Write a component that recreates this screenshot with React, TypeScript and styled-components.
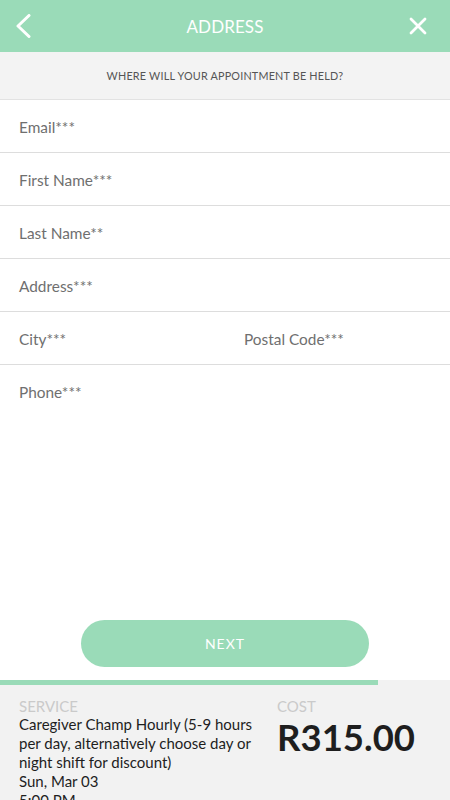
import React from "react";
import styled, { createGlobalStyle } from "styled-components";

const GlobalStyle = createGlobalStyle`
  html, body {
    margin: 0;
    padding: 0;
    background: #ffffff;
    font-family: "Lato", "Open Sans", sans-serif;
  }
  * {
    box-sizing: border-box;
  }
`;

const GREEN = "#9adbb8";

interface FieldProp {
  label: string;
}

const rows: FieldProp[][] = [
  [{ label: "Email***" }],
  [{ label: "First Name***" }],
  [{ label: "Last Name**" }],
  [{ label: "Address***" }],
  [{ label: "City***" }, { label: "Postal Code***" }],
  [{ label: "Phone***" }],
];

const BackIcon = () => (
  <svg width="24" height="24" viewBox="0 0 24 24">
    <polyline
      points="19,1.5 8,12 19,22.5"
      fill="none"
      stroke="#fff"
      strokeWidth="3"
      strokeLinecap="round"
      strokeLinejoin="round"
    />
  </svg>
);

const CloseIcon = () => (
  <svg width="24" height="24" viewBox="0 0 24 24">
    <path
      d="M5 5 L19 19 M19 5 L5 19"
      fill="none"
      stroke="#fff"
      strokeWidth="2.8"
      strokeLinecap="round"
    />
  </svg>
);

const App = () => {
  return (
    <Page>
      <GlobalStyle />
      <Header>
        <IconButton>
          <BackIcon />
        </IconButton>
        <Title>ADDRESS</Title>
        <IconButton end>
          <CloseIcon />
        </IconButton>
      </Header>
      <SubHeader>WHERE WILL YOUR APPOINTMENT BE HELD?</SubHeader>
      <Form>
        {rows.map((row, i) => (
          <Row key={i} last={i === rows.length - 1}>
            {row.map((field) => (
              <Field key={field.label}>{field.label}</Field>
            ))}
          </Row>
        ))}
      </Form>
      <ButtonArea>
        <NextButton>NEXT</NextButton>
      </ButtonArea>
      <Footer>
        <Progress style={{ width: `${(378 / 450) * 100}%` }} />
        <Summary>
          <div>
            <Label>SERVICE</Label>
            <Description>
              Caregiver Champ Hourly (5-9 hours per day, alternatively choose
              day or night shift for discount)
              <br />
              Sun, Mar 03
              <br />
              5:00 PM
            </Description>
          </div>
          <div>
            <Label>COST</Label>
            <Cost>R315.00</Cost>
          </div>
        </Summary>
      </Footer>
    </Page>
  );
};

const Page = styled.div`
  height: 100vh;
  display: flex;
  flex-direction: column;
  overflow: hidden;
`;

const Header = styled.div`
  height: 52px;
  flex-shrink: 0;
  background-color: ${GREEN};
  display: grid;
  grid-template-columns: 1fr auto 1fr;
  align-items: center;
  padding: 0 20px 0 10px;
`;

const IconButton = styled.div<{ end?: boolean }>`
  width: 24px;
  height: 24px;
  display: flex;
  justify-self: ${(p) => (p.end ? "end" : "start")};
  cursor: pointer;
`;

const Title = styled.div`
  color: #ffffff;
  font-size: 17px;
  letter-spacing: 0.1px;
  transform: translateX(5px);
`;

const SubHeader = styled.div`
  height: 48px;
  flex-shrink: 0;
  background-color: #f3f3f3;
  border-bottom: 1px solid #e2e2e2;
  display: flex;
  align-items: center;
  justify-content: center;
  color: #555555;
  font-size: 10.8px;
  letter-spacing: 0.2px;
`;

const Form = styled.div`
  display: flex;
  flex-direction: column;
`;

const Row = styled.div<{ last?: boolean }>`
  height: 53px;
  display: grid;
  grid-template-columns: 1fr 1fr;
  align-items: center;
  border-bottom: ${(p) => (p.last ? "none" : "1px solid #dddddd")};
`;

const Field = styled.div`
  padding-left: 19px;
  padding-top: 1px;
  font-size: 15.4px;
  color: #6f6f6f;
  white-space: nowrap;
`;

const ButtonArea = styled.div`
  flex: 1;
  display: flex;
  align-items: flex-end;
  justify-content: center;
  padding-bottom: 13px;
`;

const NextButton = styled.div`
  width: 288px;
  height: 47px;
  border-radius: 24px;
  background-color: ${GREEN};
  color: #ffffff;
  font-size: 14px;
  letter-spacing: 1px;
  display: flex;
  align-items: center;
  justify-content: center;
  cursor: pointer;
`;

const Footer = styled.div`
  height: 120px;
  flex-shrink: 0;
  background-color: #f2f2f2;
  overflow: hidden;
`;

const Progress = styled.div`
  height: 5px;
  background-color: ${GREEN};
`;

const Summary = styled.div`
  display: grid;
  grid-template-columns: 246px 1fr;
  column-gap: 12px;
  padding: 12px 19px 0 19px;
`;

const Label = styled.div`
  font-size: 15px;
  line-height: 18px;
  color: #cacaca;
`;

const Description = styled.div`
  font-size: 15px;
  line-height: 19px;
  color: #1e1e1e;
`;

const Cost = styled.div`
  font-size: 36.5px;
  font-weight: 700;
  line-height: 44px;
  color: #1e1e1e;
`;

export default App;
